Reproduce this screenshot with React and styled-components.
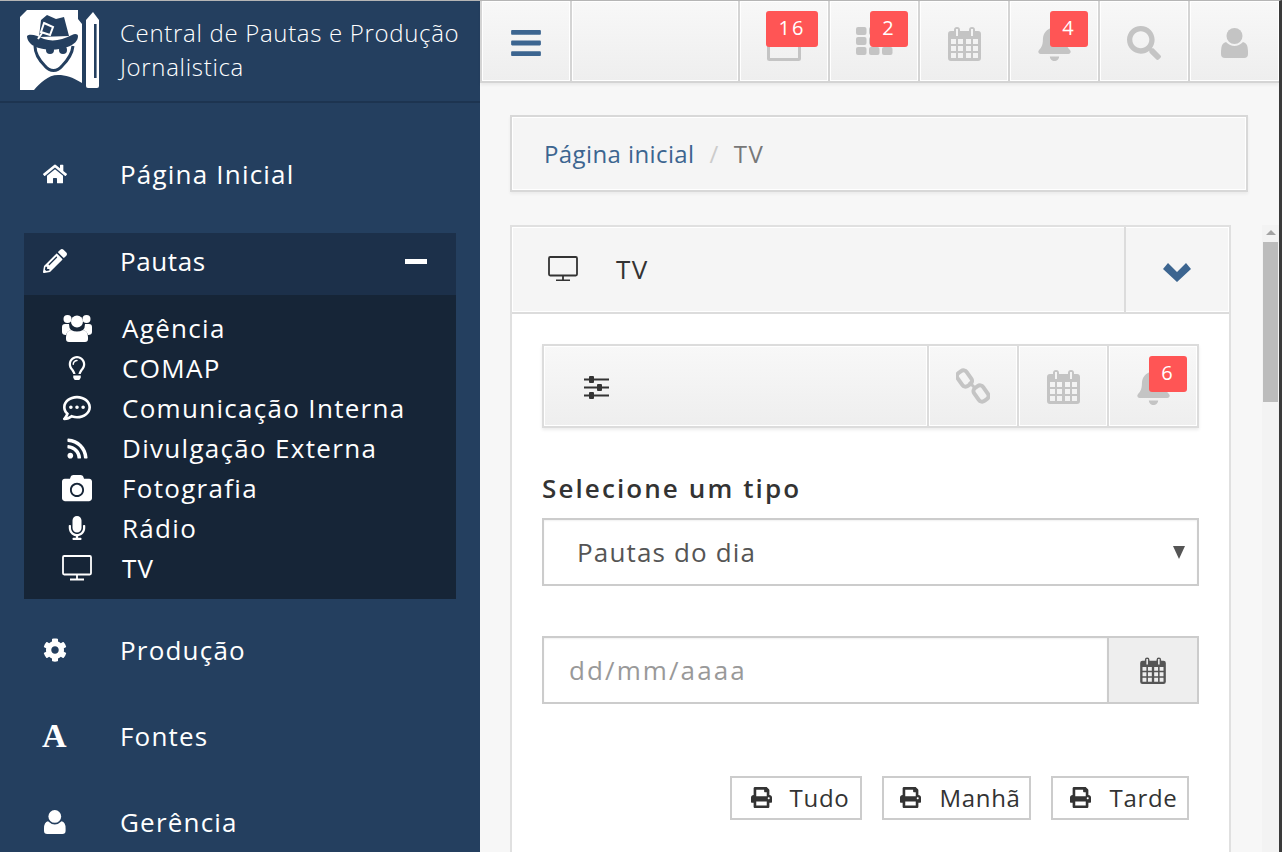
import React from 'react';
import styled, { createGlobalStyle } from 'styled-components';
import {
  FaHome, FaPencilAlt, FaRegLightbulb, FaRegCommentDots, FaRss, FaCamera,
  FaMicrophone, FaCog, FaBell, FaSearch, FaPrint, FaBars,
} from 'react-icons/fa';

const GlobalStyle = createGlobalStyle`
  html, body { margin: 0; padding: 0; height: 100%; overflow: hidden; }
  body { font-family: "Open Sans", "Liberation Sans", sans-serif; background: #f7f7f7; }
  * { box-sizing: border-box; }
`;

const Page = styled.div`
  display: flex;
  width: 1282px;
  height: 852px;
  overflow: hidden;
  border-top: 1px solid #b5b5b5;
  border-right: 3px solid #3a3a3a;
`;

const Sidebar = styled.aside`
  flex: 0 0 480px;
  background: #243f5f;
  color: #fff;
  overflow: hidden;
`;

const Brand = styled.div`
  display: flex;
  align-items: center;
  height: 102px;
  padding-left: 20px;
  padding-bottom: 3px;
  border-bottom: 2px solid #1d3450;
`;

const BrandText = styled.div`
  margin-left: 20px;
  font-size: 24px;
  line-height: 34px;
  font-weight: 300;
  letter-spacing: 0.68px;
  white-space: nowrap;
`;

const Nav = styled.nav`
  padding-top: 29px;
`;

const NavRow = styled.div`
  display: flex;
  align-items: center;
  height: 86px;
  padding-bottom: 2px;
  font-size: 26px;
  letter-spacing: 1.2px;
`;

const NavIcon = styled.span`
  display: flex;
  justify-content: center;
  align-items: center;
  width: 120px;
  padding-right: 10px;
  font-size: 24px;
`;

const SerifA = styled.span`
  font-family: "Liberation Serif", serif;
  font-weight: 700;
  font-size: 34px;
  line-height: 1;
`;

const Group = styled.div`
  margin: 15px 24px 9px;
  background: #162537;
`;

const GroupHead = styled.div`
  display: flex;
  align-items: center;
  height: 62px;
  padding-bottom: 6px;
  background: #1c304a;
  font-size: 26px;
  letter-spacing: 0.6px;
`;

const GroupIcon = styled(NavIcon)`
  width: 96px;
  padding-right: 34px;
`;

const Collapse = styled.span`
  width: 22px;
  height: 5px;
  margin-left: auto;
  margin-right: 29px;
  background: #fff;
`;

const SubList = styled.div`
  padding: 13px 0 11px;
`;

const SubRow = styled.div`
  display: flex;
  align-items: center;
  height: 40px;
  font-size: 26px;
  letter-spacing: 1.3px;
`;

const SubIcon = styled.span`
  display: flex;
  justify-content: center;
  align-items: center;
  width: 98px;
  padding-left: 8px;
  font-size: 28px;
`;

const Main = styled.main`
  flex: 1;
  min-width: 0;
  display: flex;
  flex-direction: column;
`;

const Topbar = styled.header`
  display: flex;
  height: 82px;
  flex: none;
  background: linear-gradient(#f8f8f8, #eeeeee);
  border-bottom: 2px solid #d4d4d4;
  box-shadow: 0 2px 3px rgba(0, 0, 0, 0.06);
`;

const TopCell = styled.div`
  position: relative;
  display: flex;
  justify-content: center;
  align-items: center;
  flex: ${(p) => (p.$grow ? '1' : `0 0 ${p.$width || 90}px`)};
  border-left: 2px solid #d4d4d4;
  box-shadow: inset 0 0 0 1px #fff;
  color: ${(p) => (p.$active ? '#3c6590' : '#c4c4c4')};
  font-size: 34px;
  padding-top: ${(p) => (p.$flush ? 0 : 3)}px;
`;

const Badge = styled.span`
  position: absolute;
  top: ${(p) => p.$top || 10}px;
  right: ${(p) => p.$right}px;
  width: ${(p) => p.$width || 38}px;
  height: 36px;
  border-radius: 3px;
  background: #ff5555;
  color: #fff;
  font-size: 20px;
  line-height: 34px;
  letter-spacing: 2px;
  text-align: center;
`;

const Breadcrumb = styled.div`
  display: flex;
  align-items: center;
  width: 738px;
  height: 77px;
  flex: none;
  margin: 32px 0 33px 30px;
  padding-left: 32px;
  background: #f5f5f5;
  border: 2px solid #d8d8d8;
  box-shadow: inset 0 0 0 1px #fff, 0 2px 3px rgba(0, 0, 0, 0.05);
  font-size: 24px;
  letter-spacing: 0.4px;
`;

const Crumb = styled.a`
  color: #3c6590;
`;

const Slash = styled.span`
  margin: 0 15px;
  color: #ccc;
`;

const Current = styled.span`
  color: #777;
  letter-spacing: 1.5px;
`;

const Body = styled.div`
  flex: 1;
  min-height: 0;
  display: flex;
  padding-left: 30px;
`;

const Panel = styled.section`
  width: 721px;
  flex: none;
  background: #fff;
  border: 2px solid #e0e0e0;
  border-bottom: 0;
`;

const PanelHead = styled.div`
  display: flex;
  height: 87px;
  background: #f5f5f5;
  border-bottom: 2px solid #dcdcdc;
  box-shadow: inset 0 0 0 1px #fff;
`;

const PanelTitle = styled.div`
  flex: 1;
  display: flex;
  align-items: center;
  padding: 0 0 2px 36px;
  color: #333;
  font-size: 26px;
  letter-spacing: 1.5px;
  gap: 38px;
`;

const PanelToggle = styled.div`
  flex: 0 0 105px;
  display: flex;
  justify-content: center;
  align-items: center;
  border-left: 2px solid #dcdcdc;
  padding: 5px 2px 0 0;
  color: #3c6590;
`;

const PanelBody = styled.div`
  padding: 30px 30px 0;
`;

const Toolbar = styled.div`
  display: flex;
  height: 84px;
  width: 657px;
  background: linear-gradient(#f8f8f8, #eeeeee);
  border: 2px solid #dcdcdc;
  box-shadow: 0 2px 3px rgba(0, 0, 0, 0.08);
`;

const ToolMain = styled.div`
  flex: 1;
  display: flex;
  align-items: center;
  padding: 2px 0 0 40px;
  color: #333;
  box-shadow: inset 0 0 0 1px #fff;
`;

const ToolCell = styled.div`
  position: relative;
  flex: 0 0 90px;
  display: flex;
  justify-content: center;
  align-items: center;
  border-left: 2px solid #dcdcdc;
  box-shadow: inset 0 0 0 1px #fff;
  color: #c4c4c4;
  font-size: 34px;
`;

const Label = styled.label`
  display: block;
  margin-top: 42px;
  color: #333;
  font-size: 26px;
  font-weight: 600;
  line-height: 36px;
  letter-spacing: 2.1px;
`;

const SelectBox = styled.div`
  display: flex;
  align-items: center;
  justify-content: space-between;
  height: 68px;
  width: 657px;
  margin-top: 12px;
  padding: 0 12px 0 33px;
  border: 2px solid #ccc;
  box-shadow: inset 0 1px 2px rgba(0, 0, 0, 0.06);
  color: #555;
  font-size: 26px;
  letter-spacing: 1.15px;
`;

const Caret = styled.span`
  width: 0;
  height: 0;
  border-left: 6px solid transparent;
  border-right: 6px solid transparent;
  border-top: 13px solid #555;
`;

const DateGroup = styled.div`
  display: flex;
  height: 68px;
  width: 657px;
  margin-top: 50px;
  border: 2px solid #ccc;
`;

const DateInput = styled.div`
  flex: 1;
  display: flex;
  align-items: center;
  padding-left: 25px;
  box-shadow: inset 0 1px 2px rgba(0, 0, 0, 0.06);
  color: #999;
  font-size: 26px;
  letter-spacing: 2.1px;
`;

const DateAddon = styled.div`
  flex: 0 0 90px;
  display: flex;
  justify-content: center;
  align-items: center;
  background: #eee;
  border-left: 2px solid #ccc;
  color: #555;
`;

const PrintRow = styled.div`
  display: flex;
  justify-content: flex-end;
  gap: 20px;
  width: 647px;
  margin-top: 72px;
`;

const PrintButton = styled.button`
  display: flex;
  align-items: center;
  justify-content: center;
  gap: 18px;
  width: ${(p) => p.$width}px;
  height: 44px;
  padding: 0 0 2px 8px;
  background: #fff;
  border: 2px solid #ccc;
  color: #333;
  font-family: inherit;
  font-size: 24px;
  letter-spacing: 0.7px;
`;

const ScrollTrack = styled.div`
  width: 17px;
  margin-left: 31px;
  padding-top: 5px;
  background: #f3f3f3;
  display: flex;
  flex-direction: column;
  align-items: center;
`;

const ScrollArrow = styled.div`
  width: 0;
  height: 0;
  border-left: 5px solid transparent;
  border-right: 5px solid transparent;
  border-bottom: 5px solid #a3a3a3;
`;

const ScrollThumb = styled.div`
  width: 15px;
  height: 160px;
  margin-top: 7px;
  background: #bcbcbc;
`;

function Logo() {
  const navy = '#243f5f';
  return (
    <svg width="80" height="82" viewBox="0 0 80 82">
      <path fill="#fff" d="M0 8 7 1H58V10L62 15V74C52 68 46 66 38 66C28 66 20 74 14 81H0Z" />
      <path fill="#fff" d="M66 11 73 3 79 11V77Q79 79 77 79H68Q66 79 66 77Z" />
      <rect x="74" y="15" width="2.6" height="54" fill={navy} />
      <path fill={navy} d="M19 28 21 11 27 6 36 10 44 8 49 27Z" />
      <path fill={navy} d="M7 27C10 24 18 27 24 30C33 33 42 31 52 26C55 24 58 25 58 27C58 32 54 35 50 37C38 42 24 42 14 37C10 35 7 31 7 27Z" />
      <path fill="none" stroke={navy} strokeWidth="3" d="M15 37C15 46 20 52 25 57C30 63 37 63 42 57C47 52 52 46 53 37" />
      <circle cx="30" cy="41" r="4" fill={navy} />
      <circle cx="43" cy="41" r="4" fill={navy} />
      <path fill="none" stroke="#fff" strokeWidth="2" d="M24 14 33 18 30 26 21 23Z M22 24 18 30" />
    </svg>
  );
}

function Monitor({ size = 30 }) {
  return (
    <svg width={size} height={size * 0.85} viewBox="0 0 30 25.5" fill="none" stroke="currentColor" strokeWidth="1.8">
      <rect x="1" y="1" width="28" height="18.5" rx="1.2" />
      <path d="M15 19.5V24M8 24.5H22" />
    </svg>
  );
}

function CalendarIcon({ width = 33, height = 36 }) {
  return (
    <svg width={width} height={height} viewBox="0 0 33 36" fill="currentColor">
      <path fillRule="evenodd" d="M9 2A3 3 0 0 1 12 5V6H21V5A3 3 0 0 1 27 5V6H30Q33 6 33 9V33Q33 36 30 36H3Q0 36 0 33V9Q0 6 3 6H6V5A3 3 0 0 1 9 2ZM8 4V11H10V4ZM23 4V11H25V4ZM3 14V19H8V14ZM10 14V19H15V14ZM18 14V19H23V14ZM25 14V19H30V14ZM3 21V26H8V21ZM10 21V26H15V21ZM18 21V26H23V21ZM25 21V26H30V21ZM3 28V33H8V28ZM10 28V33H15V28ZM18 28V33H23V28ZM25 28V33H30V28Z" />
    </svg>
  );
}

function BoxIcon() {
  return (
    <svg width="34" height="36" viewBox="0 0 34 36" fill="none" stroke="currentColor" strokeWidth="3">
      <rect x="1.5" y="1.5" width="31" height="33" rx="1" />
    </svg>
  );
}

function GridIcon() {
  const cells = [[0, 0], [13, 0], [26, 0], [0, 10], [13, 10], [26, 10], [0, 20], [13, 20], [26, 20]];
  return (
    <svg width="37" height="28" viewBox="0 0 37 28" fill="currentColor">
      {cells.map(([x, y]) => <rect key={x + '-' + y} x={x} y={y} width="10.5" height="8" rx="2" />)}
    </svg>
  );
}

function UserIcon({ size = 30 }) {
  return (
    <svg width={size * 0.9} height={size} viewBox="0 0 27 30" fill="currentColor">
      <circle cx="13.5" cy="8" r="8" />
      <path d="M5 14Q9 18 13.5 18T22 14Q27 15 27 23V26Q27 30 23 30H4Q0 30 0 26V23Q0 15 5 14Z" />
    </svg>
  );
}

function GroupPeople() {
  return (
    <svg width="30" height="28" viewBox="0 0 30 28" fill="currentColor">
      <circle cx="5.5" cy="5" r="4" />
      <circle cx="24.5" cy="5" r="4" />
      <circle cx="15" cy="7.5" r="6" />
      <path d="M0 13Q0 10 3 10H7Q7 14 9 16Q5 17 4 21Q0 21 0 18Z" />
      <path d="M30 13Q30 10 27 10H23Q23 14 21 16Q25 17 26 21Q30 21 30 18Z" />
      <path d="M9 16Q15 19 21 16Q26 17 26 23V25Q26 28 23 28H7Q4 28 4 25V23Q4 17 9 16Z" />
    </svg>
  );
}

function ChainIcon() {
  return (
    <svg width="34" height="36" viewBox="0 0 34 36" fill="none" stroke="currentColor" strokeWidth="4">
      <rect x="3" y="2.5" width="11" height="16" rx="4" transform="rotate(-35 8.5 10.5)" />
      <rect x="19.5" y="17.5" width="11" height="16" rx="4" transform="rotate(-35 25 25.5)" />
      <path d="M13 14 20 21" strokeWidth="3" />
    </svg>
  );
}

function SlidersIcon() {
  return (
    <svg width="25" height="23" viewBox="0 0 25 23" fill="currentColor">
      <rect x="0" y="2.5" width="25" height="2" />
      <rect x="0" y="10.5" width="25" height="2" />
      <rect x="0" y="18.5" width="25" height="2" />
      <rect x="5" y="0" width="5" height="7" rx="1" />
      <rect x="13" y="8" width="5" height="7" rx="1" />
      <rect x="5" y="16" width="5" height="7" rx="1" />
    </svg>
  );
}

function ChevronIcon() {
  return (
    <svg width="28" height="19" viewBox="0 0 28 19" fill="currentColor">
      <path d="M5 0 14 9 23 0 28 6 14 19 0 6Z" />
    </svg>
  );
}

const subItems = [
  { label: 'Agência', icon: <GroupPeople /> },
  { label: 'COMAP', icon: <FaRegLightbulb size={24} /> },
  { label: 'Comunicação Interna', icon: <FaRegCommentDots size={28} /> },
  { label: 'Divulgação Externa', icon: <FaRss size={23} /> },
  { label: 'Fotografia', icon: <FaCamera size={30} /> },
  { label: 'Rádio', icon: <FaMicrophone size={24} /> },
  { label: 'TV', icon: <Monitor /> },
];

function App() {
  return (
    <>
      <GlobalStyle />
      <Page>
        <Sidebar>
          <Brand>
            <Logo />
            <BrandText>Central de Pautas e Produção<br />Jornalistica</BrandText>
          </Brand>
          <Nav>
            <NavRow><NavIcon><FaHome /></NavIcon>Página Inicial</NavRow>
            <Group>
              <GroupHead>
                <GroupIcon><FaPencilAlt /></GroupIcon>Pautas<Collapse />
              </GroupHead>
              <SubList>
                {subItems.map((item) => (
                  <SubRow key={item.label}>
                    <SubIcon>{item.icon}</SubIcon>{item.label}
                  </SubRow>
                ))}
              </SubList>
            </Group>
            <NavRow><NavIcon><FaCog /></NavIcon>Produção</NavRow>
            <NavRow><NavIcon><SerifA>A</SerifA></NavIcon>Fontes</NavRow>
            <NavRow><NavIcon><UserIcon size={24} /></NavIcon>Gerência</NavRow>
          </Nav>
        </Sidebar>
        <Main>
          <Topbar>
            <TopCell $active><FaBars /></TopCell>
            <TopCell $grow />
            <TopCell><BoxIcon /><Badge $right={10} $width={52}>16</Badge></TopCell>
            <TopCell $flush><GridIcon /><Badge $right={10}>2</Badge></TopCell>
            <TopCell><CalendarIcon /></TopCell>
            <TopCell><FaBell size={37} /><Badge $right={10}>4</Badge></TopCell>
            <TopCell><FaSearch /></TopCell>
            <TopCell $width={91}><UserIcon /></TopCell>
          </Topbar>
          <Breadcrumb>
            <Crumb>Página inicial</Crumb><Slash>/</Slash><Current>TV</Current>
          </Breadcrumb>
          <Body>
            <Panel>
              <PanelHead>
                <PanelTitle><Monitor />TV</PanelTitle>
                <PanelToggle><ChevronIcon /></PanelToggle>
              </PanelHead>
              <PanelBody>
                <Toolbar>
                  <ToolMain><SlidersIcon /></ToolMain>
                  <ToolCell><ChainIcon /></ToolCell>
                  <ToolCell><CalendarIcon /></ToolCell>
                  <ToolCell><FaBell size={37} /><Badge $right={10} $top={10}>6</Badge></ToolCell>
                </Toolbar>
                <Label>Selecione um tipo</Label>
                <SelectBox>Pautas do dia<Caret /></SelectBox>
                <DateGroup>
                  <DateInput>dd/mm/aaaa</DateInput>
                  <DateAddon><CalendarIcon width={26} height={28} /></DateAddon>
                </DateGroup>
                <PrintRow>
                  <PrintButton $width={132}><FaPrint size={21} />Tudo</PrintButton>
                  <PrintButton $width={149}><FaPrint size={21} />Manhã</PrintButton>
                  <PrintButton $width={138}><FaPrint size={21} />Tarde</PrintButton>
                </PrintRow>
              </PanelBody>
            </Panel>
            <ScrollTrack>
              <ScrollArrow />
              <ScrollThumb />
            </ScrollTrack>
          </Body>
        </Main>
      </Page>
    </>
  );
}

export default App;
